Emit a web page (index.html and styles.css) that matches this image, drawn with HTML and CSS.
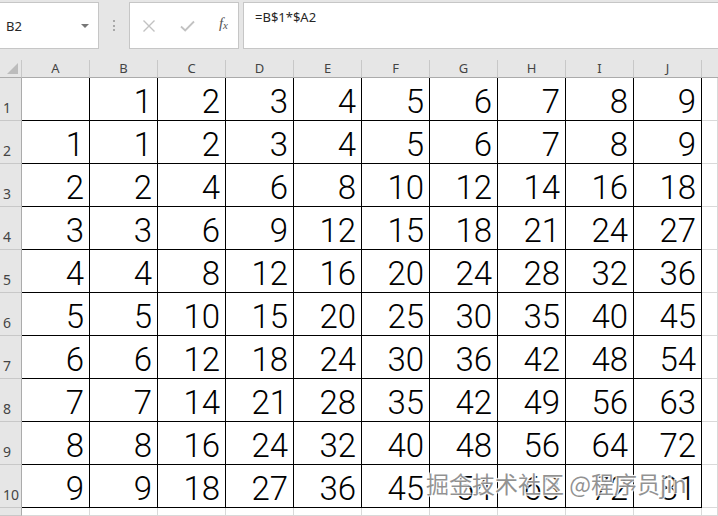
FILE: index.html
```html
<!DOCTYPE html>
<html lang="zh-CN">
<head>
<meta charset="utf-8">
<title>Sheet</title>
<link rel="stylesheet" href="styles.css">
</head>
<body>
<div class="app">
  <div class="topbar">
    <div class="namebox">
      <span class="ref">B2</span>
      <span class="caret"></span>
    </div>
    <div class="grip"><i></i><i></i><i></i></div>
    <div class="btnbox">
      <svg class="ico" width="14" height="14" viewBox="0 0 14 14"><path d="M1.5 1.5 L12.5 12.5 M12.5 1.5 L1.5 12.5" stroke="#c2c2c2" stroke-width="1.4" fill="none"/></svg>
      <svg class="ico" width="15" height="12" viewBox="0 0 15 12"><path d="M1 6.5 L5.2 10.5 L14 1.5" stroke="#c2c2c2" stroke-width="1.8" fill="none"/></svg>
      <span class="fx">f<sub>x</sub></span>
    </div>
    <div class="formula">=B$1*$A2</div>
  </div>

  <div class="sheet">
    <div class="corner"><span class="tri"></span></div>
    <div class="ch">A</div><div class="ch">B</div><div class="ch">C</div><div class="ch">D</div><div class="ch">E</div><div class="ch">F</div><div class="ch">G</div><div class="ch">H</div><div class="ch">I</div><div class="ch">J</div><div class="ch last"></div>

    <div class="rh">1</div><div class="c"></div><div class="c">1</div><div class="c">2</div><div class="c">3</div><div class="c">4</div><div class="c">5</div><div class="c">6</div><div class="c">7</div><div class="c">8</div><div class="c">9</div><div class="x"></div>
    <div class="rh">2</div><div class="c">1</div><div class="c">1</div><div class="c">2</div><div class="c">3</div><div class="c">4</div><div class="c">5</div><div class="c">6</div><div class="c">7</div><div class="c">8</div><div class="c">9</div><div class="x"></div>
    <div class="rh">3</div><div class="c">2</div><div class="c">2</div><div class="c">4</div><div class="c">6</div><div class="c">8</div><div class="c">10</div><div class="c">12</div><div class="c">14</div><div class="c">16</div><div class="c">18</div><div class="x"></div>
    <div class="rh">4</div><div class="c">3</div><div class="c">3</div><div class="c">6</div><div class="c">9</div><div class="c">12</div><div class="c">15</div><div class="c">18</div><div class="c">21</div><div class="c">24</div><div class="c">27</div><div class="x"></div>
    <div class="rh">5</div><div class="c">4</div><div class="c">4</div><div class="c">8</div><div class="c">12</div><div class="c">16</div><div class="c">20</div><div class="c">24</div><div class="c">28</div><div class="c">32</div><div class="c">36</div><div class="x"></div>
    <div class="rh">6</div><div class="c">5</div><div class="c">5</div><div class="c">10</div><div class="c">15</div><div class="c">20</div><div class="c">25</div><div class="c">30</div><div class="c">35</div><div class="c">40</div><div class="c">45</div><div class="x"></div>
    <div class="rh">7</div><div class="c">6</div><div class="c">6</div><div class="c">12</div><div class="c">18</div><div class="c">24</div><div class="c">30</div><div class="c">36</div><div class="c">42</div><div class="c">48</div><div class="c">54</div><div class="x"></div>
    <div class="rh">8</div><div class="c">7</div><div class="c">7</div><div class="c">14</div><div class="c">21</div><div class="c">28</div><div class="c">35</div><div class="c">42</div><div class="c">49</div><div class="c">56</div><div class="c">63</div><div class="x"></div>
    <div class="rh">9</div><div class="c">8</div><div class="c">8</div><div class="c">16</div><div class="c">24</div><div class="c">32</div><div class="c">40</div><div class="c">48</div><div class="c">56</div><div class="c">64</div><div class="c">72</div><div class="x"></div>
    <div class="rh">10</div><div class="c">9</div><div class="c">9</div><div class="c">18</div><div class="c">27</div><div class="c">36</div><div class="c">45</div><div class="c">54</div><div class="c">63</div><div class="c">72</div><div class="c">81</div><div class="x"></div>

    <div class="rh"></div><div class="x"></div><div class="x"></div><div class="x"></div><div class="x"></div><div class="x"></div><div class="x"></div><div class="x"></div><div class="x"></div><div class="x"></div><div class="x"></div><div class="x"></div>
  </div>

  <div class="watermark">掘金技术社区 @程序员jin</div>
</div>
</body>
</html>
```

FILE: styles.css
```css
* { box-sizing: border-box; }
html, body { margin: 0; padding: 0; }
body {
  background: #e6e6e6;
  font-family: "Liberation Sans", Arial, sans-serif;
  width: 718px;
  height: 516px;
  overflow: hidden;
}
.app { position: relative; width: 718px; height: 516px; overflow: hidden; }

/* ---------- top bar ---------- */
.topbar {
  height: 60px;
  padding-top: 2px;
  display: flex;
  align-items: flex-start;
}
.namebox {
  width: 100px;
  height: 47px;
  margin-left: -1px;
  background: #fff;
  border: 1px solid #c6c6c6;
  display: flex;
  align-items: center;
  justify-content: space-between;
  padding: 0 9px 0 6px;
}
.ref {
  font-family: "Noto Sans", "Open Sans", sans-serif;
  font-size: 13px;
  color: #262626;
}
.caret {
  width: 0; height: 0;
  border-left: 4px solid transparent;
  border-right: 4px solid transparent;
  border-top: 4px solid #777;
}
.grip {
  width: 30px;
  height: 47px;
  display: flex;
  flex-direction: column;
  align-items: center;
  justify-content: center;
  gap: 2.5px;
}
.grip i {
  display: block;
  width: 2px; height: 2px;
  background: #a8a8a8;
}
.btnbox {
  width: 110px;
  height: 47px;
  background: #fff;
  border: 1px solid #c6c6c6;
  display: flex;
  align-items: center;
  padding: 0 10px 0 12px;
  justify-content: space-between;
}
.fx {
  font-family: "Liberation Serif", "Times New Roman", serif;
  font-style: italic;
  font-size: 15px;
  color: #555;
  line-height: 1;
  margin-top: -4px;
}
.fx sub { font-size: 11px; vertical-align: -1px; }
.formula {
  margin-left: 4px;
  flex: 1;
  height: 47px;
  background: #fff;
  border: 1px solid #c6c6c6;
  border-right: none;
  padding: 6px 0 0 11px;
  font-family: "Noto Sans", "Open Sans", sans-serif;
  font-size: 13px;
  color: #262626;
  line-height: 16px;
}

/* ---------- sheet grid ---------- */
.sheet {
  display: grid;
  grid-template-columns: 22px repeat(10, 68px) 1fr;
  grid-template-rows: 18px repeat(10, 43px) 1fr;
  height: 456px;
}
.corner {
  background: #e6e6e6;
  border-right: 1px solid #c8c8c8;
  border-bottom: 1px solid #ababab;
  position: relative;
}
.tri {
  position: absolute;
  right: 3px; bottom: 3px;
  width: 0; height: 0;
  border-left: 11px solid transparent;
  border-bottom: 11px solid #bcbcbc;
}
.ch {
  background: #e6e6e6;
  border-right: 1px solid #c8c8c8;
  border-bottom: 1px solid #ababab;
  font-family: "Noto Sans", "Open Sans", sans-serif;
  font-size: 13px;
  color: #444;
  text-align: center;
  line-height: 17px;
}
.ch.last { border-right: none; }
.rh {
  background: #e6e6e6;
  border-right: 1px solid #ababab;
  border-bottom: 1px solid #c8c8c8;
  font-family: "Noto Sans", "Open Sans", sans-serif;
  font-size: 14px;
  color: #444;
  display: flex;
  align-items: flex-end;
  padding: 0 0 4px 3px;
  line-height: 16px;
}
.rh:nth-last-child(12) { padding-left: 0; }
.c {
  background: #fff;
  border-right: 1px solid #000;
  border-bottom: 1px solid #000;
  display: flex;
  align-items: flex-end;
  justify-content: flex-end;
  padding: 0 5px 2px 0;
  font-family: Roboto, "Liberation Sans", Arial, sans-serif;
  font-weight: 300;
  font-size: 33px;
  line-height: 1;
  color: #000;
}
.x {
  background: #fff;
  border-right: 1px solid #d9d9d9;
  border-bottom: 1px solid #d9d9d9;
}

/* ---------- watermark ---------- */
.watermark {
  position: absolute;
  left: 426px;
  top: 468px;
  font-family: "Noto Sans CJK SC", "Noto Sans", sans-serif;
  font-size: 23px;
  line-height: 30px;
  color: rgba(110, 110, 110, 0.75);
  text-shadow: 1px 1px 1px rgba(255,255,255,0.9), -1px -1px 1px rgba(255,255,255,0.9), 1px -1px 1px rgba(255,255,255,0.9), -1px 1px 1px rgba(255,255,255,0.9);
  white-space: nowrap;
}
```
